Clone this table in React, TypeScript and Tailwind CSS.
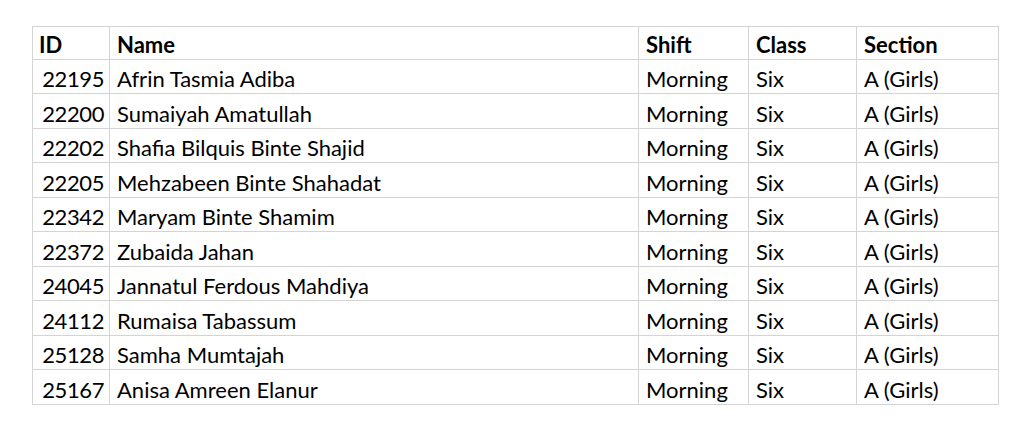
import React from "react";

const rows: [string, string][] = [
  ["22195", "Afrin Tasmia Adiba"],
  ["22200", "Sumaiyah Amatullah"],
  ["22202", "Shafia Bilquis Binte Shajid"],
  ["22205", "Mehzabeen Binte Shahadat"],
  ["22342", "Maryam Binte Shamim"],
  ["22372", "Zubaida Jahan"],
  ["24045", "Jannatul Ferdous Mahdiya"],
  ["24112", "Rumaisa Tabassum"],
  ["25128", "Samha Mumtajah"],
  ["25167", "Anisa Amreen Elanur"],
];

export default function App() {
  return (
    <div className="w-[1024px] h-[432px] bg-white pt-[26px] pl-[32px]" style={{ fontFamily: "Lato, 'Noto Sans', sans-serif" }}>
      <table className="border-collapse table-fixed w-[966px] text-[22px] text-black leading-none">
        <colgroup>
          <col className="w-[77px]" />
          <col className="w-[529px]" />
          <col className="w-[110px]" />
          <col className="w-[108px]" />
          <col className="w-[142px]" />
        </colgroup>
        <thead>
          <tr className="h-[33px]">
            <th className="border border-[#d4d4d4] text-left font-bold px-[6px] pt-[3px]">ID</th>
            <th className="border border-[#d4d4d4] text-left font-bold px-[7px] pt-[3px]">Name</th>
            <th className="border border-[#d4d4d4] text-left font-bold px-[7px] pt-[3px]">Shift</th>
            <th className="border border-[#d4d4d4] text-left font-bold px-[7px] pt-[3px]">Class</th>
            <th className="border border-[#d4d4d4] text-left font-bold px-[7px] pt-[3px]">Section</th>
          </tr>
        </thead>
        <tbody>
          {rows.map(([id, name], i) => (
            <tr key={id} className={i % 2 === 0 ? "h-[34px]" : "h-[35px]"}>
              <td className="border border-[#d4d4d4] text-right px-[5px] pt-[5px] tracking-[-0.4px]">{id}</td>
              <td className="border border-[#d4d4d4] px-[7px] pt-[5px]">{name}</td>
              <td className="border border-[#d4d4d4] px-[7px] pt-[5px]">Morning</td>
              <td className="border border-[#d4d4d4] px-[7px] pt-[5px]">Six</td>
              <td className="border border-[#d4d4d4] px-[7px] pt-[5px]">A (Girls)</td>
            </tr>
          ))}
        </tbody>
      </table>
    </div>
  );
}
